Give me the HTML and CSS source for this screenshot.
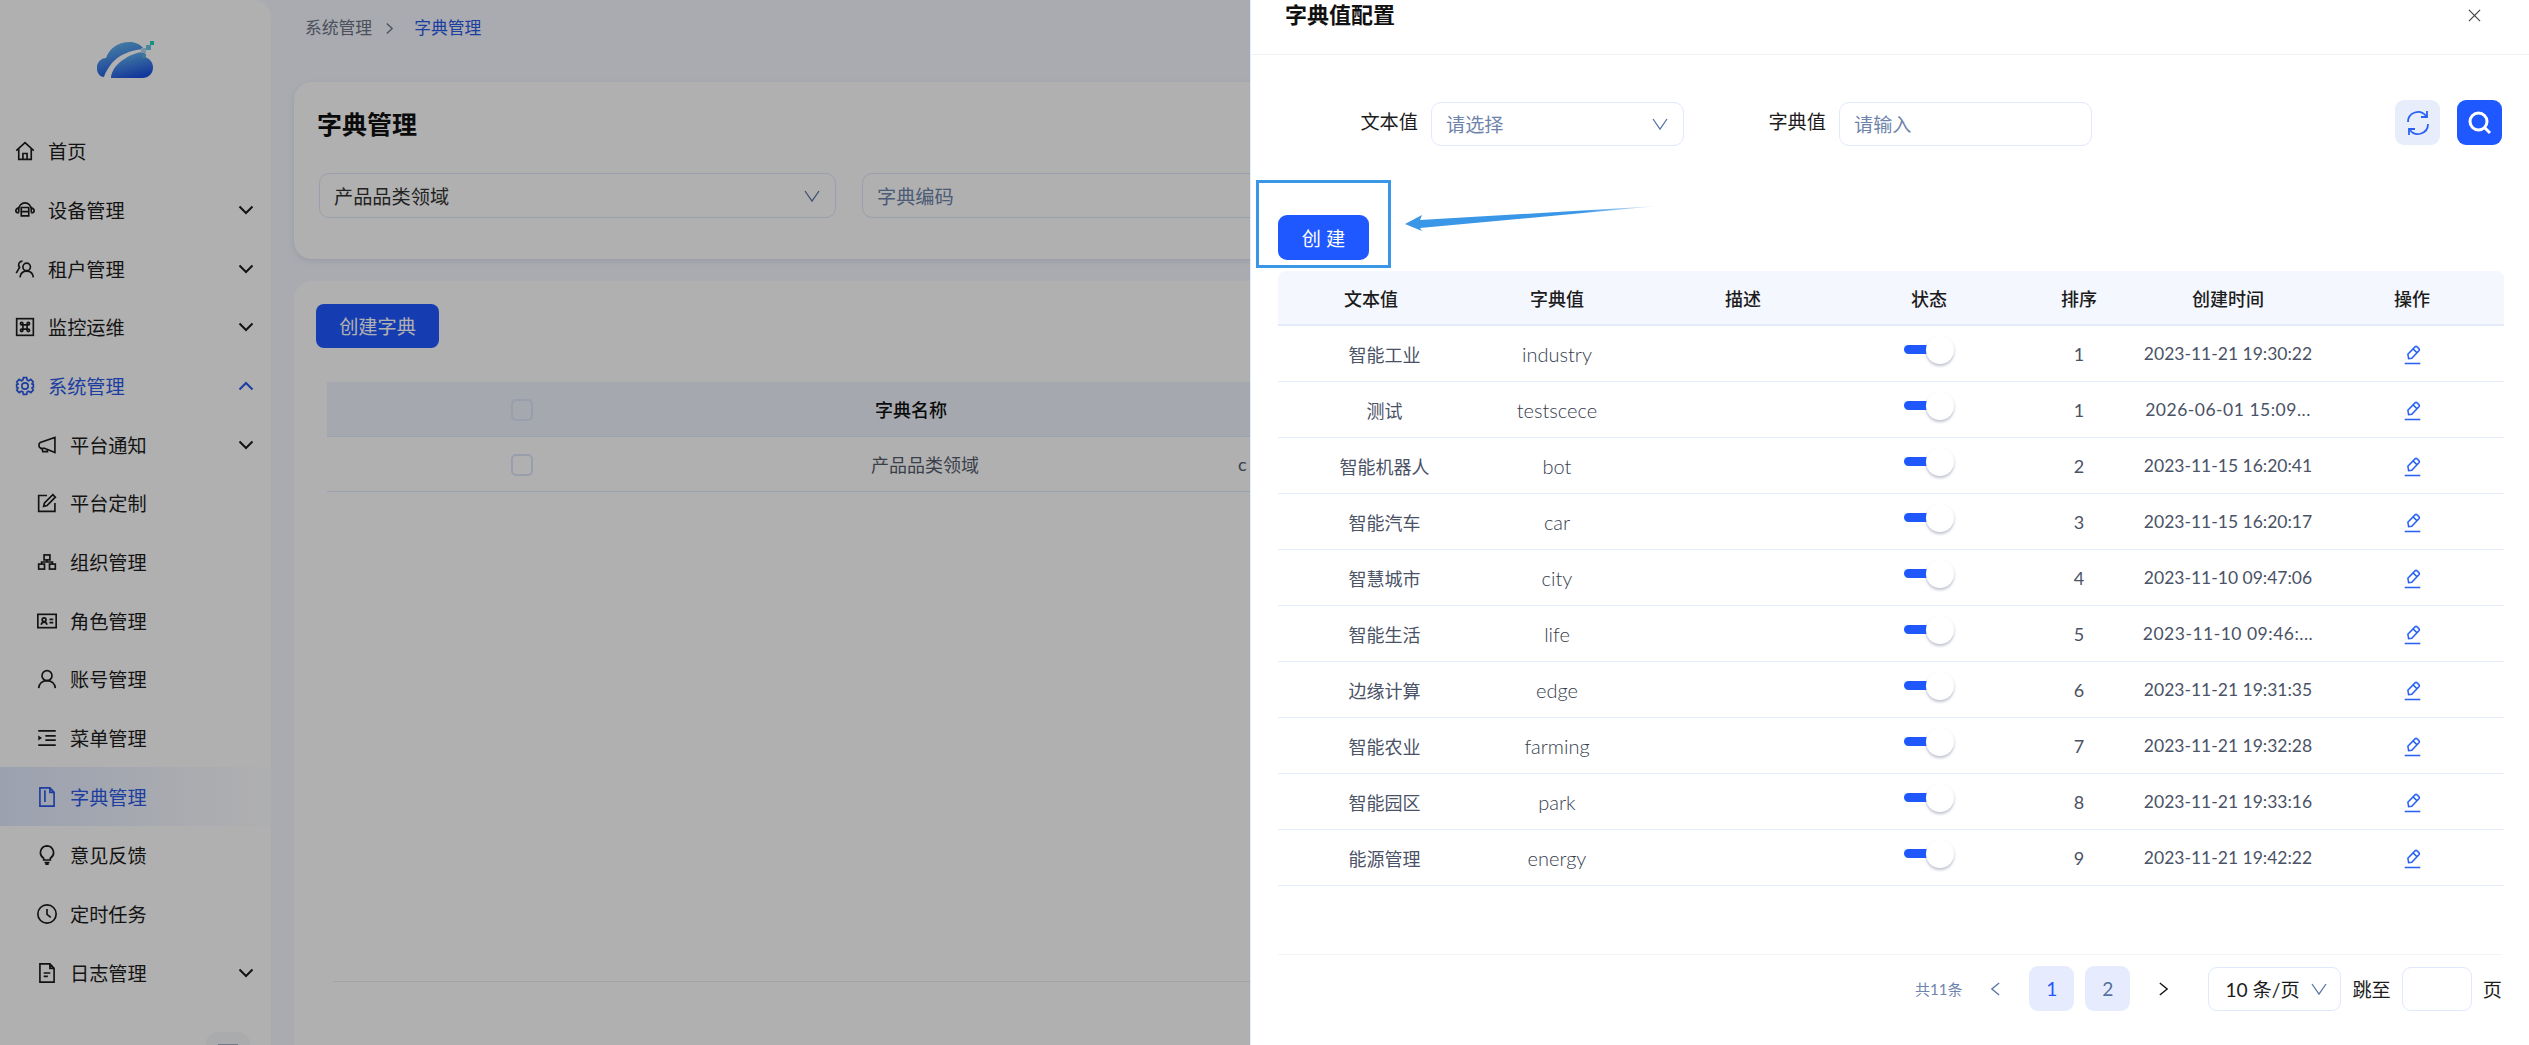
FILE: index.html
```html
<!DOCTYPE html>
<html lang="zh-CN">
<head>
    <meta charset="UTF-8">
    <title>字典管理</title>
    <link rel="stylesheet" href="styles.css">
</head>
<body>
    <svg class="icon-defs" xmlns="http://www.w3.org/2000/svg">
        <symbol id="i-home" viewBox="0 0 24 24"><path d="M1.500 11.500 12 2l10.500 9.500M4.500 9V22h15V9M9.500 22v-7h5v7"/></symbol>
        <symbol id="i-device" viewBox="0 0 24 24"><path d="M4.500 15V11a7.500 7.500 0 0 1 15 0v4M4.500 9.500C2.500 10 1 11.500 1 13s1.500 2.500 3.500 2.500M19.500 9.500c2 .5 3.500 2 3.500 3.500s-1.500 2.500-3.500 2.500M7.500 9h9v10h-9zM7.500 14h9"/></symbol>
        <symbol id="i-users" viewBox="0 0 24 24"><circle cx="14" cy="9.500" r="4.500"/><path d="M6 22c.5-4.500 3.500-7.500 8-7.500s7.500 3 8 7.500M9 2.500a4.500 4.500 0 0 0-3.500 7.500L1.500 17"/></symbol>
        <symbol id="i-cmd" viewBox="0 0 24 24"><rect x="2" y="2" width="20" height="20"/><path d="M9.500 9.500h5v5h-5zM9.500 9.500H8a1.500 1.500 0 1 1 1.500-1.500zM14.500 9.500V8A1.500 1.500 0 1 1 16 9.500zM14.500 14.500H16a1.500 1.500 0 1 1-1.500 1.500zM9.500 14.500V16A1.500 1.500 0 1 1 8 14.500z"/></symbol>
        <symbol id="i-gear" viewBox="0 0 24 24"><path d="M10 2h4l.6 2.900 1.900.8L19 4.100 21.900 7l-1.600 2.500.6.500 1.100 0v4l-1.700.5 1.600 2.500L19 19.900l-2.500-1.600-1.900.8L14 22h-4l-.6-2.900-1.900-.8L5 19.900 2.100 17l1.600-2.500L2 14v-4l1.700-.5L2.100 7 5 4.100l2.500 1.600 1.900-.8z"/><circle cx="12" cy="12" r="3.800"/></symbol>
        <symbol id="i-horn" viewBox="0 0 24 24"><path d="M21.500 3v18L9 16H4.500L2.500 14v-3.500L4 9zM6 16.500l1 3.500h5.500l-.5-2"/></symbol>
        <symbol id="i-edit" viewBox="0 0 24 24"><path d="M21.500 12v10H2V3h10M19 2l3 3-10 10-4 1 1-4z"/></symbol>
        <symbol id="i-org" viewBox="0 0 24 24"><rect x="8.500" y="3.500" width="7" height="6"/><rect x="2" y="14.500" width="7" height="6"/><rect x="15" y="14.500" width="7" height="6"/><path d="M12 9.500v2.500M5.500 14.500V12h13v2.500"/></symbol>
        <symbol id="i-card" viewBox="0 0 24 24"><rect x="1" y="4" width="22" height="16"/><circle cx="8.500" cy="10.500" r="2.300"/><path d="M5 16.500c.4-2 1.800-3.200 3.500-3.200s3.100 1.200 3.500 3.200M15 10h4.500M15 14h4.500"/></symbol>
        <symbol id="i-user" viewBox="0 0 24 24"><circle cx="12" cy="8" r="6"/><path d="M2 23c.5-5.500 4.500-9 10-9s9.500 3.500 10 9"/></symbol>
        <symbol id="i-indent" viewBox="0 0 24 24"><path d="M1.500 3.500h21M10 9.500h12.500M10 14.500h12.500M1.500 20.500h21"/><path class="solid" d="M1.500 9l4.500 3-4.500 3z"/></symbol>
        <symbol id="i-zip" viewBox="0 0 24 24"><path d="M3.500 1h12l5 5.500V23h-17zM15.500 1v5.500h5M9.500 4v14"/></symbol>
        <symbol id="i-bulb" viewBox="0 0 24 24"><path d="M9 21h6M10 23h4M12 1a8 8 0 0 0-4 14.800V18h8v-2.200A8 8 0 0 0 12 1z"/></symbol>
        <symbol id="i-clock" viewBox="0 0 24 24"><circle cx="12" cy="12" r="11"/><path d="M12 6v6.500l4.500 3.500"/></symbol>
        <symbol id="i-log" viewBox="0 0 24 24"><path d="M3.500 1h12l5 5.500V23h-17zM15.500 1v5.500h5M8 12h8M8 16h5"/></symbol>
        <symbol id="i-chevron" viewBox="0 0 16 16"><path d="M1.500 4.500 8 11l6.500-6.500"/></symbol>
        <symbol id="i-down" viewBox="0 0 18 18"><path d="M2 4l7 10 7-10"/></symbol>
        <symbol id="i-pencil" viewBox="0 0 24 28"><path d="M6.500 19 5.500 13 15.500 2.500a2 2 0 0 1 3 0l2.500 2.500a2 2 0 0 1 0 3L11 18.500zM13 5.500l5.500 5.500"/><path d="M1 26h22"/></symbol>
    </svg>

    <div class="layout">
        <aside class="sidebar">
            <div class="logo">
                <svg width="58" height="38" viewBox="0 0 58 38">
                    <defs>
                        <linearGradient id="logoFill" x1="0.200" y1="0" x2="0.600" y2="1">
                            <stop offset="0%" stop-color="#6cc0ee"/>
                            <stop offset="100%" stop-color="#1b4fe0"/>
                        </linearGradient>
                    </defs>
                    <path fill="url(#logoFill)" d="M7 36C2 36-1 30 0 25c1-5 5-8 9-8C12 8 20 1 33 1c5 0 10 2 14 7C33 9 22 14 15 22c-4 5-7 10-8 14z"/>
                    <path fill="url(#logoFill)" d="M14 37c0-4 3-11 8-15 7-6 15-10 25-11.500 1 2 2 4.500 2 6 4.500 1.500 7 5.500 7 10 0 6-4.500 10.500-10.500 10.500z"/>
                    <rect x="44" y="7" width="5" height="5" fill="#b0d8f2"/>
                    <rect x="49" y="4" width="5" height="5" fill="#6cc6e6"/>
                    <rect x="45" y="13" width="4" height="4" fill="#5eb0d8"/>
                    <rect x="53" y="0" width="4" height="4" fill="#1fd6bc"/>
                </svg>
            </div>
            <nav class="nav">
                <a class="nav-item"><svg class="nav-icon"><use href="#i-home"/></svg>首页</a>
                <a class="nav-item"><svg class="nav-icon"><use href="#i-device"/></svg>设备管理<svg class="nav-arrow"><use href="#i-chevron"/></svg></a>
                <a class="nav-item"><svg class="nav-icon"><use href="#i-users"/></svg>租户管理<svg class="nav-arrow"><use href="#i-chevron"/></svg></a>
                <a class="nav-item"><svg class="nav-icon"><use href="#i-cmd"/></svg>监控运维<svg class="nav-arrow"><use href="#i-chevron"/></svg></a>
                <a class="nav-item open"><svg class="nav-icon"><use href="#i-gear"/></svg>系统管理<svg class="nav-arrow up"><use href="#i-chevron"/></svg></a>
                <a class="nav-item sub"><svg class="nav-icon"><use href="#i-horn"/></svg>平台通知<svg class="nav-arrow"><use href="#i-chevron"/></svg></a>
                <a class="nav-item sub"><svg class="nav-icon"><use href="#i-edit"/></svg>平台定制</a>
                <a class="nav-item sub"><svg class="nav-icon"><use href="#i-org"/></svg>组织管理</a>
                <a class="nav-item sub"><svg class="nav-icon"><use href="#i-card"/></svg>角色管理</a>
                <a class="nav-item sub"><svg class="nav-icon"><use href="#i-user"/></svg>账号管理</a>
                <a class="nav-item sub"><svg class="nav-icon"><use href="#i-indent"/></svg>菜单管理</a>
                <a class="nav-item sub active"><svg class="nav-icon"><use href="#i-zip"/></svg>字典管理</a>
                <a class="nav-item sub"><svg class="nav-icon"><use href="#i-bulb"/></svg>意见反馈</a>
                <a class="nav-item sub"><svg class="nav-icon"><use href="#i-clock"/></svg>定时任务</a>
                <a class="nav-item sub"><svg class="nav-icon"><use href="#i-log"/></svg>日志管理<svg class="nav-arrow"><use href="#i-chevron"/></svg></a>
            </nav>
            <div class="collapse-btn"><span class="collapse-bar"></span></div>
        </aside>

        <main class="main">
            <div class="breadcrumb">
                <span>系统管理</span>
                <svg class="crumb-sep" viewBox="0 0 10 14"><path d="M2 1.500 8 7l-6 5.500"/></svg>
                <span class="crumb-current">字典管理</span>
            </div>

            <section class="card card-search">
                <h2 class="card-title">字典管理</h2>
                <div class="search-row">
                    <div class="field field-select">产品品类领域<svg class="field-arrow"><use href="#i-down"/></svg></div>
                    <div class="field field-placeholder">字典编码</div>
                </div>
            </section>

            <section class="card card-list">
                <button class="btn-primary">创建字典</button>
                <table class="bg-table">
                    <colgroup><col class="bg-col-check"><col class="bg-col-name"><col></colgroup>
                    <thead>
                        <tr><th><span class="check"></span></th><th>字典名称</th><th></th></tr>
                    </thead>
                    <tbody>
                        <tr><td><span class="check"></span></td><td class="bg-name">产品品类领域</td><td class="bg-code">c</td></tr>
                    </tbody>
                </table>
                <div class="card-foot"></div>
            </section>
        </main>
    </div>

    <div class="mask"></div>

    <aside class="drawer">
        <header class="drawer-head">
            <h3 class="drawer-title">字典值配置</h3>
            <svg class="drawer-close" viewBox="0 0 14 14"><path d="M1 1l12 12M13 1 1 13"/></svg>
        </header>

        <div class="filter-row">
            <label class="filter-label first">文本值</label>
            <div class="field filter-field field-placeholder">请选择<svg class="field-arrow"><use href="#i-down"/></svg></div>
            <label class="filter-label">字典值</label>
            <div class="field filter-field field-placeholder">请输入</div>
            <div class="filter-actions">
                <button class="icon-btn refresh">
                    <svg width="24" height="26" viewBox="0 0 24 26"><path d="M2 12a10 10 0 0 1 18-6M22 14a10 10 0 0 1-18 6M21 1v6h-6M3 25v-6h6"/></svg>
                </button>
                <button class="icon-btn search">
                    <svg width="24" height="24" viewBox="0 0 24 24"><circle cx="10.500" cy="10.500" r="8.500"/><path d="M16.500 16.500 22 22"/></svg>
                </button>
            </div>
        </div>

        <button class="btn-primary btn-create">创 建</button>

        <table class="dict-table">
            <colgroup>
                <col class="c-wide"><col class="c-wide"><col class="c-wide"><col class="c-wide"><col class="c-sort"><col class="c-time"><col class="c-time">
            </colgroup>
            <thead>
                <tr><th>文本值</th><th>字典值</th><th>描述</th><th>状态</th><th>排序</th><th>创建时间</th><th>操作</th></tr>
            </thead>
            <tbody>
                <tr><td>智能工业</td><td class="val">industry</td><td></td><td><span class="switch"><i></i><b></b></span></td><td>1</td><td class="time">2023-11-21 19:30:22</td><td><svg class="edit"><use href="#i-pencil"/></svg></td></tr>
                <tr><td>测试</td><td class="val">testscece</td><td></td><td><span class="switch"><i></i><b></b></span></td><td>1</td><td class="time cut">2026-06-01 15:09...</td><td><svg class="edit"><use href="#i-pencil"/></svg></td></tr>
                <tr><td>智能机器人</td><td class="val">bot</td><td></td><td><span class="switch"><i></i><b></b></span></td><td>2</td><td class="time">2023-11-15 16:20:41</td><td><svg class="edit"><use href="#i-pencil"/></svg></td></tr>
                <tr><td>智能汽车</td><td class="val">car</td><td></td><td><span class="switch"><i></i><b></b></span></td><td>3</td><td class="time">2023-11-15 16:20:17</td><td><svg class="edit"><use href="#i-pencil"/></svg></td></tr>
                <tr><td>智慧城市</td><td class="val">city</td><td></td><td><span class="switch"><i></i><b></b></span></td><td>4</td><td class="time">2023-11-10 09:47:06</td><td><svg class="edit"><use href="#i-pencil"/></svg></td></tr>
                <tr><td>智能生活</td><td class="val">life</td><td></td><td><span class="switch"><i></i><b></b></span></td><td>5</td><td class="time cut">2023-11-10 09:46:...</td><td><svg class="edit"><use href="#i-pencil"/></svg></td></tr>
                <tr><td>边缘计算</td><td class="val">edge</td><td></td><td><span class="switch"><i></i><b></b></span></td><td>6</td><td class="time">2023-11-21 19:31:35</td><td><svg class="edit"><use href="#i-pencil"/></svg></td></tr>
                <tr><td>智能农业</td><td class="val">farming</td><td></td><td><span class="switch"><i></i><b></b></span></td><td>7</td><td class="time">2023-11-21 19:32:28</td><td><svg class="edit"><use href="#i-pencil"/></svg></td></tr>
                <tr><td>智能园区</td><td class="val">park</td><td></td><td><span class="switch"><i></i><b></b></span></td><td>8</td><td class="time">2023-11-21 19:33:16</td><td><svg class="edit"><use href="#i-pencil"/></svg></td></tr>
                <tr><td>能源管理</td><td class="val">energy</td><td></td><td><span class="switch"><i></i><b></b></span></td><td>9</td><td class="time">2023-11-21 19:42:22</td><td><svg class="edit"><use href="#i-pencil"/></svg></td></tr>
            </tbody>
        </table>

        <footer class="pager">
            <span class="pager-total">共11条</span>
            <span class="pager-nav prev"><svg viewBox="0 0 12 16"><path d="M10 1.500 2 8l8 6.500"/></svg></span>
            <span class="pager-num current">1</span>
            <span class="pager-num">2</span>
            <span class="pager-nav next"><svg viewBox="0 0 12 16"><path d="M2 1.500 10 8l-8 6.500"/></svg></span>
            <div class="pager-size">10 条/页<svg class="field-arrow"><use href="#i-down"/></svg></div>
            <span class="pager-text">跳至</span>
            <div class="pager-jump"></div>
            <span class="pager-text">页</span>
        </footer>

        <!-- annotation drawn on top of the screenshot -->
        <div class="note-box"></div>
        <svg class="note-arrow" width="260" height="32" viewBox="0 0 260 32">
            <defs>
                <linearGradient id="arrowFill" x1="0" y1="0" x2="1" y2="0">
                    <stop offset="0%" stop-color="#3a96e6"/>
                    <stop offset="70%" stop-color="#3a96e6"/>
                    <stop offset="100%" stop-color="#3a96e6" stop-opacity="0.1"/>
                </linearGradient>
            </defs>
            <polygon fill="url(#arrowFill)" points="0,24 17,15 15,20 253,6 15,28 17,31"/>
        </svg>
    </aside>
</body>
</html>
```

FILE: styles.css
```css
* {
    box-sizing: border-box;
}

body {
    margin: 0;
    height: 100vh;
    overflow: hidden;
    background: #f5f8ff;
    font-family: "Lato", "Noto Sans CJK SC", sans-serif;
    font-size: 18px;
    color: #4a5266;
}

.icon-defs {
    display: none;
}

.layout {
    display: flex;
    height: 100vh;
}

/* sidebar */
.sidebar {
    width: 271px;
    flex-shrink: 0;
    background: #fff;
    border-top-right-radius: 18px;
    overflow: hidden;
}

.logo {
    height: 122px;
    padding: 41px 0 0 97px;
}

.nav-item {
    display: flex;
    align-items: center;
    height: 58.67px;
    padding: 0 17px 0 15px;
    font-size: 19.2px;
    color: #1c1c1c;
}

.nav-item.sub {
    padding-left: 37px;
}

.nav-icon {
    width: 20px;
    height: 20px;
    margin-right: 13px;
    fill: none;
    stroke: currentColor;
    stroke-width: 2;
    flex-shrink: 0;
}

symbol .solid {
    fill: currentColor;
    stroke: none;
}

.nav-arrow {
    width: 16px;
    height: 16px;
    margin-left: auto;
    fill: none;
    stroke: currentColor;
    stroke-width: 2;
}

.nav-arrow.up {
    transform: rotate(180deg);
}

.nav-item.open {
    color: #2b5be8;
}

.nav-item.active {
    color: #2b5be8;
    background: linear-gradient(90deg, #e2eaff 0%, rgba(245, 248, 255, 0.2) 95%);
}

.collapse-btn {
    width: 44px;
    height: 44px;
    margin: 30px 0 0 206px;
    padding-top: 12px;
    background: #f6f8fb;
    border-radius: 12px;
}

.collapse-bar {
    display: block;
    width: 20px;
    height: 2px;
    margin: 0 auto;
    background: #a6b0c4;
}

/* main page behind the drawer */
.main {
    flex: 1;
    min-width: 0;
    display: flex;
    flex-direction: column;
    padding-left: 23px;
    overflow: hidden;
}

.breadcrumb {
    height: 82px;
    padding: 16px 0 0 11px;
    display: flex;
    align-items: flex-start;
    gap: 13px;
    font-size: 16.800px;
    line-height: 24px;
    color: #6c7486;
}

.crumb-sep {
    width: 9px;
    height: 13px;
    margin: 6px 7px 0 0;
    fill: none;
    stroke: #6c7486;
    stroke-width: 1.400;
}

.crumb-current {
    color: #2b5be8;
}

.card {
    background: #fff;
    border-radius: 18px;
}

.card-search {
    height: 177px;
    padding: 27px 23px 0;
    box-shadow: 0 2px 6px rgba(120, 130, 160, 0.18);
}

.card-title {
    margin: 0;
    font-size: 25px;
    line-height: 30px;
    font-weight: 700;
    color: #111;
}

.search-row {
    display: flex;
    gap: 26px;
    margin: 34px 0 0 2px;
}

.field {
    display: flex;
    align-items: center;
    width: 517px;
    height: 45px;
    padding: 0 14px;
    border: 1px solid #dfe7fa;
    border-radius: 10px;
    background: #fff;
    font-size: 19.200px;
    color: #333;
}

.field-placeholder {
    color: #6e84ab;
}

.field-arrow {
    width: 18px;
    height: 18px;
    margin-left: auto;
    fill: none;
    stroke: #5a76a6;
    stroke-width: 1.300;
}

.card-list {
    flex: 1;
    margin-top: 22px;
    padding: 23px 22px 0;
    border-bottom-left-radius: 0;
}

.btn-primary {
    display: block;
    width: 123px;
    height: 44px;
    border: 0;
    border-radius: 8px;
    background: #1f58ff;
    font-family: inherit;
    font-size: 19.200px;
    color: #fff;
}

.bg-table {
    width: 1180px;
    margin: 34px 0 0 11px;
    border-collapse: separate;
    border-spacing: 0;
    table-layout: fixed;
}

.bg-col-check {
    width: 390px;
}

.bg-col-name {
    width: 388px;
}

.bg-table th,
.bg-table td {
    height: 55px;
    padding: 0;
    text-align: center;
    font-weight: 500;
    border-bottom: 1px solid #e0e8fa;
}

.bg-table th {
    background: #eff3fc;
    color: #111;
    font-size: 18px;
}

.bg-table td {
    color: #555c6e;
    font-weight: 400;
}

.bg-table .bg-name {
    padding-left: 28px;
}

.bg-table .bg-code {
    padding-left: 133px;
    text-align: left;
}

.check {
    display: inline-block;
    width: 22px;
    height: 22px;
    border: 2px solid #dde5f8;
    border-radius: 5px;
    background: #fff;
    vertical-align: middle;
}

.bg-table th .check {
    background: #eff3fc;
}

.card-foot {
    margin: 489px 0 0 17px;
    border-top: 1px solid #ececec;
}

/* mask */
.mask {
    position: fixed;
    inset: 0;
    background: rgba(0, 0, 0, 0.31);
}

/* drawer */
.drawer {
    position: fixed;
    top: 0;
    bottom: 0;
    left: 1250px;
    width: 1279px;
    padding: 0 27px 0 27px;
    background: #fff;
    border-left: 1px solid #e3ecff;
    display: flex;
    flex-direction: column;
}

.drawer-head {
    display: flex;
    justify-content: space-between;
    height: 55px;
    margin: 0 -27px 0 -27px;
    padding: 0 48px 0 34px;
    border-bottom: 1px solid #f0f2f6;
}

.drawer-title {
    margin: 0;
    font-size: 22px;
    line-height: 30px;
    font-weight: 700;
    color: #111;
}

.drawer-close {
    width: 13px;
    height: 13px;
    margin-top: 9px;
    fill: none;
    stroke: #444;
    stroke-width: 1.300;
}

.filter-row {
    display: flex;
    align-items: flex-start;
    margin-top: 45px;
    height: 46px;
}

.filter-label {
    width: 142px;
    margin-right: 13px;
    text-align: right;
    font-size: 19.200px;
    line-height: 44px;
    color: #1c1c1c;
}

.filter-label.first {
    width: 140px;
}

.filter-field {
    width: 253px;
    height: 44px;
    margin-top: 2px;
    border-color: #e0e9fd;
}

.filter-actions {
    display: flex;
    gap: 17px;
    margin-left: auto;
}

.icon-btn {
    display: flex;
    align-items: center;
    justify-content: center;
    width: 45px;
    height: 45px;
    padding: 0;
    border: 0;
    border-radius: 9px;
}

.icon-btn svg {
    fill: none;
}

.icon-btn.refresh {
    background: #e8edfc;
}

.icon-btn.refresh svg {
    stroke: #2a62f6;
    stroke-width: 1.800;
}

.icon-btn.search {
    background: #1f58ff;
}

.icon-btn.search svg {
    stroke: #fff;
    stroke-width: 3;
}

.btn-create {
    width: 91px;
    height: 45px;
    margin-top: 69px;
    border-radius: 9px;
}

.dict-table {
    width: 1224px;
    margin-top: 11px;
    border-collapse: separate;
    border-spacing: 0;
    table-layout: fixed;
}

.c-wide {
    width: 186px;
}

.c-sort {
    width: 114px;
}

.c-time {
    width: 184px;
}

.dict-table th,
.dict-table td {
    height: 56px;
    padding: 0;
    text-align: center;
    white-space: nowrap;
    border-bottom: 1px solid #e3ebf8;
}

.dict-table th {
    height: 55px;
    background: #f4f7fe;
    font-size: 18px;
    font-weight: 500;
    color: #1c1c1c;
    border-bottom: 2px solid #e3ebfb;
}

.dict-table th:first-child {
    border-top-left-radius: 8px;
}

.dict-table th:last-child {
    border-top-right-radius: 8px;
}

.dict-table td:first-child {
    padding-left: 27px;
}

.dict-table td:nth-child(3) {
    border-right: 1px solid #fff;
}

.dict-table .val {
    font-size: 20px;
    font-weight: 300;
    color: #363c4d;
}

.dict-table .time {
    font-size: 17.500px;
}

.dict-table .time.cut {
    letter-spacing: 0.5px;
}

.switch {
    display: inline-flex;
    align-items: center;
    margin-bottom: 8px;
    vertical-align: middle;
}

.switch i {
    display: block;
    width: 26px;
    height: 9px;
    border-radius: 5px 0 0 5px;
    background: #1f58ff;
}

.switch b {
    display: block;
    width: 28px;
    height: 28px;
    margin-left: -4px;
    border-radius: 50%;
    background: #fff;
    box-shadow: 0 2px 3px rgba(90, 100, 130, 0.4);
}

.edit {
    width: 17px;
    height: 20px;
    fill: none;
    stroke: #2a62f6;
    stroke-width: 2.200;
    vertical-align: middle;
}

.pager {
    display: flex;
    align-items: center;
    justify-content: flex-end;
    gap: 11px;
    margin-top: 68px;
    padding: 11px 0 0 0;
    border-top: 1px solid #f2f4f8;
    font-size: 19.200px;
    color: #1c1c1c;
}

.pager-total {
    font-size: 15px;
    color: #6e84ab;
}

.pager-nav {
    display: flex;
    align-items: center;
    justify-content: center;
    width: 45px;
    height: 45px;
}

.pager-nav svg {
    width: 11px;
    height: 16px;
    fill: none;
    stroke-width: 1.500;
}

.pager-nav.prev svg {
    stroke: #5a76a6;
}

.pager-nav.next svg {
    stroke: #111;
}

.pager-num {
    display: flex;
    align-items: center;
    justify-content: center;
    width: 45px;
    height: 45px;
    border-radius: 9px;
    background: #e6ecfd;
    font-size: 19.200px;
    color: #56719f;
}

.pager-num.current {
    color: #1f58ff;
}

.pager-size {
    display: flex;
    align-items: center;
    width: 133px;
    height: 44px;
    margin-left: 11px;
    padding: 0 12px 0 16px;
    border: 1px solid #dfe8fd;
    border-radius: 9px;
    white-space: nowrap;
}

.pager-jump {
    width: 70px;
    height: 44px;
    border: 1px solid #dfe8fd;
    border-radius: 9px;
}

.pager-text {
    white-space: nowrap;
}

/* annotation */
.note-box {
    position: absolute;
    left: 5px;
    top: 180px;
    width: 135px;
    height: 88px;
    border: 3px solid #3a96e6;
}

.note-arrow {
    position: absolute;
    left: 154px;
    top: 200px;
}
```
